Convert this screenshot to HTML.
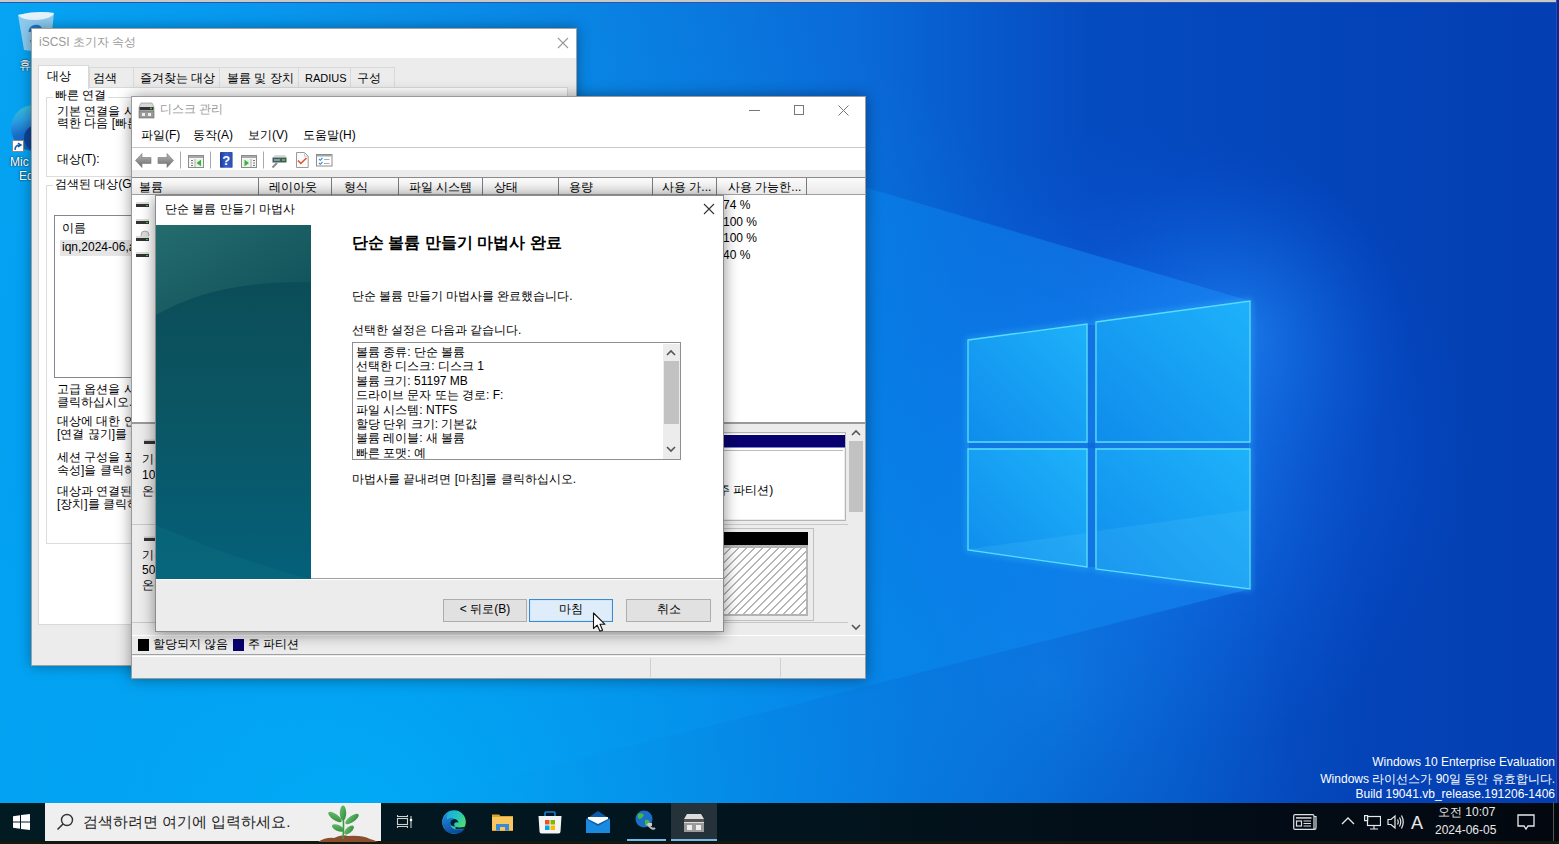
<!DOCTYPE html>
<html><head><meta charset="utf-8">
<style>
*{margin:0;padding:0;box-sizing:border-box}
html,body{width:1559px;height:844px;overflow:hidden;background:#0060d0;font-family:"Liberation Sans",sans-serif;font-size:12px;color:#000}
.a{position:absolute}
#desk{left:0;top:0;width:1559px;height:844px;overflow:hidden}
.t{position:absolute;white-space:nowrap;line-height:1}
</style></head><body>
<div id="desk" class="a">
<svg class="a" style="left:0;top:0" width="1559" height="844" viewBox="0 0 1559 844">
<defs>
<linearGradient id="bg" x1="0" y1="0" x2="1559" y2="0" gradientUnits="userSpaceOnUse">
<stop offset="0" stop-color="#0aa8f4"/>
<stop offset="0.38" stop-color="#0a82e2"/>
<stop offset="0.55" stop-color="#0a6ad8"/>
<stop offset="0.70" stop-color="#054bc0"/>
<stop offset="1" stop-color="#033eb2"/>
</linearGradient>
<linearGradient id="beam" x1="1250" y1="0" x2="0" y2="0" gradientUnits="userSpaceOnUse">
<stop offset="0" stop-color="#1a8cf8" stop-opacity="0.9"/>
<stop offset="0.3" stop-color="#0a88f0" stop-opacity="0.75"/>
<stop offset="1" stop-color="#00a0f0" stop-opacity="0.6"/>
</linearGradient>
<radialGradient id="glow2" cx="1240" cy="330" r="170" gradientUnits="userSpaceOnUse">
<stop offset="0" stop-color="#2a9cff" stop-opacity="0.45"/>
<stop offset="1" stop-color="#0a60e0" stop-opacity="0"/>
</radialGradient>
<radialGradient id="glow3" cx="1050" cy="680" r="330" gradientUnits="userSpaceOnUse">
<stop offset="0" stop-color="#1a90f0" stop-opacity="0.45"/>
<stop offset="1" stop-color="#0a70e0" stop-opacity="0"/>
</radialGradient>
<radialGradient id="glow" cx="1150" cy="445" r="320" gradientUnits="userSpaceOnUse">
<stop offset="0" stop-color="#2a9cff" stop-opacity="0.8"/>
<stop offset="0.55" stop-color="#1470f0" stop-opacity="0.35"/>
<stop offset="1" stop-color="#0a50e0" stop-opacity="0"/>
</radialGradient>
<radialGradient id="floor" cx="350" cy="844" r="950" gradientUnits="userSpaceOnUse">
<stop offset="0" stop-color="#00b0f8" stop-opacity="0.85"/>
<stop offset="0.6" stop-color="#0098ee" stop-opacity="0.35"/>
<stop offset="1" stop-color="#0090ee" stop-opacity="0"/>
</radialGradient>
<linearGradient id="pane" x1="0" y1="1" x2="1" y2="0">
<stop offset="0" stop-color="#0f8cec"/>
<stop offset="1" stop-color="#1eb2fa"/>
</linearGradient>
<filter id="bl" x="-20%" y="-20%" width="140%" height="140%"><feGaussianBlur stdDeviation="3"/></filter>
</defs>
<rect width="1559" height="844" fill="url(#bg)"/>
<rect width="1559" height="844" fill="url(#glow)"/>
<rect width="1559" height="844" fill="url(#glow2)"/>
<rect width="1559" height="844" fill="url(#glow3)"/>
<polygon points="1250,301 0,-68 0,906 1250,589" fill="url(#beam)" opacity="0.6"/>
<rect width="1559" height="844" fill="url(#floor)"/>
<g stroke="#40d0ff" stroke-width="3" fill="none" filter="url(#bl)" opacity="0.55">
<polygon points="968,340 1087,324 1087,442 968,442"/>
<polygon points="1096,322 1250,301 1250,442 1096,442"/>
<polygon points="968,449 1087,449 1087,567 968,550"/>
<polygon points="1096,449 1250,449 1250,589 1096,569"/>
</g>
<rect x="1088" y="325" width="7" height="242" fill="#0a5ed6" opacity="0.5"/>
<rect x="969" y="443" width="280" height="5" fill="#0a5ed6" opacity="0.5"/>
<g stroke="#5adcff" stroke-width="1.3" fill="url(#pane)">
<polygon points="968,340 1087,324 1087,442 968,442"/>
<polygon points="1096,322 1250,301 1250,442 1096,442"/>
<polygon points="968,449 1087,449 1087,567 968,550"/>
<polygon points="1096,449 1250,449 1250,589 1096,569"/>
</g>
<polygon points="969,549 1087,533 1087,566 969,550" fill="#6ad8ff" opacity="0.14"/>
<polygon points="1096,531 1249,510 1249,588 1096,568" fill="#6ad8ff" opacity="0.13"/>
</svg>
<div class="a" style="left:0;top:0;width:1559px;height:2px;background:#c8c8c8"></div><div class="a" style="left:0;top:2px;width:1559px;height:1px;background:#2856a8"></div>
<div class="a" style="left:1556px;top:0;width:1px;height:844px;background:#1a50c0"></div><div class="a" style="left:1557px;top:0;width:2px;height:844px;background:#1a2288"></div>
</div>


<!-- desktop icons -->
<div class="a" style="left:16px;top:10px;width:40px;height:42px">
<svg width="40" height="42" viewBox="0 0 40 42"><path d="M2,5 Q20,0 38,3 L34,40 Q20,42 8,40 Z" fill="#b8d8ee" opacity="0.75"/><path d="M2,5 Q20,0 38,3 Q36,9 20,10 Q5,10 2,5Z" fill="#e4f2fb"/><path d="M14,22 A6,6 0 0 1 25,19 M26,27 A6,6 0 0 1 15,30" stroke="#1f74c4" stroke-width="3" fill="none"/></svg>
</div>
<div class="t" style="left:19px;top:59px;color:#fff;font-size:12px;text-shadow:0 0 2px #000">휴</div>
<div class="a" style="left:11px;top:105px;width:46px;height:46px;border-radius:50%;background:linear-gradient(165deg,#3ec6d6 0%,#2a9ee0 30%,#1a6cc8 55%,#0d56b0 100%)"></div><div class="a" style="left:24px;top:125px;width:26px;height:26px;border-radius:50%;background:#0b4596"></div>
<div class="a" style="left:12px;top:140px;width:12px;height:12px;background:#fff;border:1px solid #888"><svg width="10" height="10" viewBox="0 0 10 10"><path d="M2,8 Q2,3 7,3 M5,1 L8,3 L5,5" stroke="#1060b0" stroke-width="1.5" fill="none"/></svg></div>
<div class="t" style="left:10px;top:156px;color:#fff;font-size:12px;text-shadow:0 0 2px #000">Mic</div>
<div class="t" style="left:19px;top:170px;color:#fff;font-size:12px;text-shadow:0 0 2px #000">Ed</div>

<!-- iSCSI window -->
<div class="a" id="isc" style="left:31px;top:28px;width:546px;height:638px;background:#ececec;border:1px solid #a0a0a0;box-shadow:0 0 12px rgba(0,0,0,0.35);overflow:hidden">
 <div class="a" style="left:0;top:0;width:544px;height:29px;background:#fff"></div>
 <div class="t" style="left:7px;top:7px;color:#999;font-size:12px">iSCSI 초기자 속성</div>
 <svg class="a" style="left:525px;top:8px" width="12" height="12" viewBox="0 0 12 12"><path d="M1,1 L11,11 M11,1 L1,11" stroke="#999" stroke-width="1.1"/></svg>
 <!-- tabs -->
 <div class="a" style="left:57px;top:38px;width:306px;height:21px;border:1px solid #d9d9d9;border-bottom:none;background:#ececec"></div>
 <div class="a" style="left:101px;top:38px;width:1px;height:21px;background:#d9d9d9"></div>
 <div class="a" style="left:187px;top:38px;width:1px;height:21px;background:#d9d9d9"></div>
 <div class="a" style="left:266px;top:38px;width:1px;height:21px;background:#d9d9d9"></div>
 <div class="a" style="left:318px;top:38px;width:1px;height:21px;background:#d9d9d9"></div>
 <div class="a" style="left:6px;top:58px;width:530px;height:538px;background:#fff;border:1px solid #d9d9d9"></div>
 <div class="a" style="left:6px;top:36px;width:51px;height:24px;background:#fff;border:1px solid #d9d9d9;border-bottom:none"></div>
 <div class="t" style="left:15px;top:41px;color:#000;font-size:12px">대상</div>
 <div class="t" style="left:61px;top:43px;font-size:12px">검색</div>
 <div class="t" style="left:108px;top:43px;font-size:12px">즐겨찾는 대상</div>
 <div class="t" style="left:195px;top:43px;font-size:12px">볼륨 및 장치</div>
 <div class="t" style="left:273px;top:44px;font-size:11px">RADIUS</div>
 <div class="t" style="left:325px;top:43px;font-size:12px">구성</div>
 <!-- group 1 -->
 <div class="a" style="left:14px;top:68px;width:514px;height:80px;border:1px solid #dcdcdc"></div>
 <div class="t" style="left:21px;top:60px;font-size:12px;background:#fff;padding:0 2px">빠른 연결</div>
 <div class="t" style="left:25px;top:76px;font-size:12px;line-height:12px">기본 연결을 사용하여 대상에 로그온하려면 대상의 IP 주소 또는 DNS 이름을 입<br>력한 다음 [빠른 연결]을 클릭하십시오.</div>
 <div class="t" style="left:25px;top:124px;font-size:12px">대상(T):</div>
 <!-- group 2 -->
 <div class="a" style="left:14px;top:156px;width:514px;height:359px;border:1px solid #dcdcdc"></div>
 <div class="t" style="left:21px;top:149px;font-size:12px;background:#fff;padding:0 2px">검색된 대상(G)</div>
 <div class="a" style="left:22px;top:186px;width:420px;height:163px;border:1px solid #828790;background:#fff"></div>
 <div class="t" style="left:30px;top:193px;font-size:12px">이름</div>
 <div class="a" style="left:28px;top:211px;width:200px;height:16px;background:#e5e5e5"></div>
 <div class="t" style="left:30px;top:212px;font-size:12px">iqn,2024-06,a</div>
 <div class="t" style="left:25px;top:354px;font-size:12px;line-height:13px">고급 옵션을 사용하여 연결하려면 대상을 선택한 다음 [연결]을<br>클릭하십시오.</div>
 <div class="t" style="left:25px;top:386px;font-size:12px;line-height:13px">대상에 대한 연결을 완전히 끊으려면 대상을 선택한 다음<br>[연결 끊기]를 클릭하십시오.</div>
 <div class="t" style="left:25px;top:422px;font-size:12px;line-height:13px">세션 구성을 포함한 대상 속성을 보려면 대상을 선택하고 [속<br>속성]을 클릭하십시오.</div>
 <div class="t" style="left:25px;top:456px;font-size:12px;line-height:13px">대상과 연결된 장치를 구성하려면 대상을 선택한 다음<br>[장치]를 클릭하십시오.</div>
</div>


<!-- Disk management window -->
<div class="a" style="left:131px;top:96px;width:735px;height:583px;background:#ececec;border:1px solid #9a9a9a;box-shadow:0 0 14px rgba(0,0,0,0.4)"></div>
<div class="a" style="left:132px;top:97px;width:733px;height:51px;background:#fff"></div>
<div class="a" style="left:132px;top:147px;width:733px;height:1px;background:#c8c8c8"></div>
<div class="a" style="left:132px;top:148px;width:733px;height:22px;background:#fff"></div>
<!-- title icon -->
<svg class="a" style="left:138px;top:102px" width="17" height="17" viewBox="0 0 17 17">
<path d="M3,1 L14,1 L16,5 L16,9 L1,9 L1,5 Z" fill="#d8d8d8" stroke="#888" stroke-width="0.6"/>
<rect x="1.5" y="5" width="14" height="3" fill="#333"/><rect x="12" y="5.6" width="2" height="1.6" fill="#3c3"/>
<rect x="1" y="9" width="15" height="7" fill="#9a9a9a" stroke="#666" stroke-width="0.6"/>
<rect x="4" y="11" width="3" height="3" fill="#eee"/><rect x="10" y="11" width="3" height="3" fill="#eee"/>
</svg>
<div class="t" style="left:160px;top:103px;color:#9a9a9a;font-size:12px">디스크 관리</div>
<div class="a" style="left:749px;top:110px;width:11px;height:1px;background:#777"></div>
<div class="a" style="left:794px;top:105px;width:10px;height:10px;border:1px solid #777"></div>
<svg class="a" style="left:838px;top:105px" width="11" height="11" viewBox="0 0 11 11"><path d="M0.5,0.5 L10.5,10.5 M10.5,0.5 L0.5,10.5" stroke="#777" stroke-width="1"/></svg>
<!-- menu -->
<div class="t" style="left:141px;top:129px;font-size:12px">파일(F)</div>
<div class="t" style="left:193px;top:129px;font-size:12px">동작(A)</div>
<div class="t" style="left:248px;top:129px;font-size:12px">보기(V)</div>
<div class="t" style="left:303px;top:129px;font-size:12px">도움말(H)</div>
<!-- toolbar -->
<svg class="a" style="left:134px;top:151px" width="200" height="19" viewBox="0 0 200 19">
<defs><linearGradient id="ag" x1="0" y1="0" x2="0" y2="1"><stop offset="0" stop-color="#b8b8b8"/><stop offset="1" stop-color="#6a6a6a"/></linearGradient></defs>
<path d="M1.5,9.5 L8,2.5 L8,6.5 L17,6.5 L17,12.5 L8,12.5 L8,16.5 Z" fill="url(#ag)" stroke="#777" stroke-width="0.6"/>
<path d="M39.5,9.5 L33,2.5 L33,6.5 L24,6.5 L24,12.5 L33,12.5 L33,16.5 Z" fill="url(#ag)" stroke="#777" stroke-width="0.6"/>
<rect x="46" y="0.5" width="1" height="17" fill="#aaa"/>
<rect x="54.5" y="4.5" width="15" height="12" fill="#f6f6f6" stroke="#8c8c8c"/>
<rect x="55" y="5" width="14" height="2" fill="#a8a8a8"/>
<rect x="57" y="9" width="2" height="1" fill="#777"/><rect x="57" y="11.5" width="2" height="1" fill="#777"/><rect x="57" y="14" width="2" height="1" fill="#777"/>
<rect x="60.5" y="8" width="1" height="8" fill="#aaa"/>
<rect x="62" y="8.5" width="6.5" height="7" fill="#e4f4e4"/>
<path d="M67,8.8 L62.5,12 L67,15.2 Z" fill="#3cae3c"/>
<rect x="76" y="0.5" width="1" height="17" fill="#aaa"/>
<defs><linearGradient id="hb" x1="0" y1="0" x2="1" y2="0"><stop offset="0" stop-color="#1d3a98"/><stop offset="0.5" stop-color="#3a62cc"/><stop offset="1" stop-color="#2a4cb0"/></linearGradient></defs>
<rect x="86" y="1" width="12.6" height="15.8" rx="0.8" fill="url(#hb)"/>
<text x="92.3" y="13.8" font-size="13" fill="#fff" text-anchor="middle" font-family="Liberation Sans" font-weight="bold">?</text>
<rect x="107.5" y="4.5" width="15" height="12" fill="#f6f6f6" stroke="#8c8c8c"/>
<rect x="108" y="5" width="14" height="2" fill="#a8a8a8"/>
<rect x="109" y="8.5" width="6.5" height="7" fill="#e4f4e4"/>
<path d="M110.5,8.8 L115,12 L110.5,15.2 Z" fill="#3cae3c"/>
<rect x="116.5" y="8" width="1" height="8" fill="#aaa"/>
<rect x="119" y="9" width="2" height="1" fill="#777"/><rect x="119" y="11.5" width="2" height="1" fill="#777"/><rect x="119" y="14" width="2" height="1" fill="#777"/>
<rect x="129" y="0.5" width="1" height="17" fill="#aaa"/>
<path d="M139,6.5 L141,4 L151,4 L152.5,6.5 Z" fill="#d8d8d8"/>
<rect x="138.5" y="6.5" width="14" height="5" fill="#4a5a5a"/>
<rect x="148" y="8" width="3" height="2" fill="#3c3"/>
<rect x="140" y="8" width="6" height="2" fill="#7a9ab0"/>
<path d="M143,12 L138.5,16.5" stroke="#8a8a8a" stroke-width="2"/>
<path d="M162.5,1.5 L170.5,1.5 L174.2,5.2 L174.2,16.5 L162.5,16.5 Z" fill="#fafafa" stroke="#9a9a9a"/>
<path d="M170.5,1.5 V5.2 H174.2" fill="none" stroke="#bbb" stroke-width="0.8"/>
<path d="M164,9.5 L166.8,12.5 L172.5,7" stroke="#e0502a" stroke-width="1.5" fill="none"/>
<rect x="182.5" y="3.5" width="15.5" height="11.5" fill="#fff" stroke="#8c8c8c"/>
<rect x="183" y="4" width="14.5" height="1.5" fill="#9aa"/>
<path d="M185,8 L186.3,9.3 L188.5,7 M185,12 L186.3,13.3 L188.5,11" stroke="#3a86e0" stroke-width="1.1" fill="none"/>
<path d="M190,8.5 H195.5 M190,12.5 H195.5" stroke="#aaa" stroke-width="1"/>
</svg>
<!-- list view -->
<div class="a" style="left:132px;top:177px;width:733px;height:1px;background:#8a8a8a"></div>
<div class="a" style="left:132px;top:178px;width:733px;height:17px;background:linear-gradient(#fbfbfb,#e9e9e9);border-bottom:1px solid #a0a0a0"></div>
<div class="a" style="left:132px;top:195px;width:733px;height:227px;background:#fff"></div>
<div class="a" style="left:132px;top:422px;width:733px;height:2px;background:#9a9a9a"></div>
<div class="a" style="left:258px;top:178px;width:1px;height:17px;background:#7a7a7a"></div>
<div class="a" style="left:331px;top:178px;width:1px;height:17px;background:#7a7a7a"></div>
<div class="a" style="left:398px;top:178px;width:1px;height:17px;background:#7a7a7a"></div>
<div class="a" style="left:482px;top:178px;width:1px;height:17px;background:#7a7a7a"></div>
<div class="a" style="left:558px;top:178px;width:1px;height:17px;background:#7a7a7a"></div>
<div class="a" style="left:652px;top:178px;width:1px;height:17px;background:#7a7a7a"></div>
<div class="a" style="left:716px;top:178px;width:1px;height:17px;background:#7a7a7a"></div>
<div class="a" style="left:806px;top:178px;width:1px;height:17px;background:#7a7a7a"></div>
<div class="t" style="left:139px;top:181px;font-size:12px">볼륨</div>
<div class="t" style="left:269px;top:181px;font-size:12px">레이아웃</div>
<div class="t" style="left:344px;top:181px;font-size:12px">형식</div>
<div class="t" style="left:409px;top:181px;font-size:12px">파일 시스템</div>
<div class="t" style="left:494px;top:181px;font-size:12px">상태</div>
<div class="t" style="left:569px;top:181px;font-size:12px">용량</div>
<div class="t" style="left:662px;top:181px;font-size:12px">사용 가...</div>
<div class="t" style="left:728px;top:181px;font-size:12px">사용 가능한...</div>
<div class="t" style="left:723px;top:199px;font-size:12px">74 %</div>
<div class="t" style="left:723px;top:216px;font-size:12px">100 %</div>
<div class="t" style="left:723px;top:232px;font-size:12px">100 %</div>
<div class="t" style="left:723px;top:249px;font-size:12px">40 %</div>
<svg class="a" style="left:135px;top:198px" width="16" height="64" viewBox="0 0 16 64">
<g><rect x="1" y="4" width="13" height="2" fill="#ddd"/><rect x="1" y="6" width="13" height="3" fill="#333"/><rect x="11" y="7" width="2" height="1" fill="#4c4"/></g>
<g transform="translate(0,17)"><rect x="1" y="4" width="13" height="2" fill="#ddd"/><rect x="1" y="6" width="13" height="3" fill="#333"/><rect x="11" y="7" width="2" height="1" fill="#4c4"/></g>
<g transform="translate(0,34)"><circle cx="10" cy="3" r="4" fill="#ddd" stroke="#999" stroke-width="0.8"/><rect x="1" y="4" width="13" height="2" fill="#ddd"/><rect x="1" y="6" width="13" height="3" fill="#333"/><rect x="11" y="7" width="2" height="1" fill="#4c4"/></g>
<g transform="translate(0,50)"><rect x="1" y="4" width="13" height="2" fill="#ddd"/><rect x="1" y="6" width="13" height="3" fill="#333"/><rect x="11" y="7" width="2" height="1" fill="#4c4"/></g>
</svg>
<!-- lower pane -->
<div class="a" style="left:132px;top:424px;width:733px;height:211px;background:#ececec"></div>
<div class="a" style="left:132px;top:524px;width:716px;height:1px;background:#c8c8c8"></div>
<div class="a" style="left:132px;top:622px;width:716px;height:1px;background:#c8c8c8"></div>
<svg class="a" style="left:143px;top:438px" width="16" height="110" viewBox="0 0 16 110"><rect x="1" y="3" width="14" height="3" fill="#333"/><rect x="1" y="1.5" width="14" height="1.5" fill="#ccc"/><rect x="1" y="100" width="14" height="3" fill="#333"/><rect x="1" y="98.5" width="14" height="1.5" fill="#ccc"/></svg>
<div class="t" style="left:142px;top:451px;font-size:12px;line-height:16px">기본<br>10.00 GB<br>온라인</div>
<div class="t" style="left:142px;top:548px;font-size:12px;line-height:15px">기본<br>50.00 GB<br>온라인</div>
<!-- partition right pieces -->
<div class="a" style="left:700px;top:432px;width:146px;height:89px;background:#fff;border:1px solid #b5b5b5;box-shadow:inset 0 0 0 1px #ececec"></div>
<div class="a" style="left:700px;top:435px;width:145px;height:13px;background:#08006e;border-bottom:1px solid #7a86c8"></div>
<div class="a" style="left:700px;top:450px;width:143px;height:1px;background:#bbb"></div>
<div class="t" style="left:714px;top:484px;font-size:12px">(주 파티션)</div>
<div class="a" style="left:700px;top:528px;width:114px;height:93px;background:#ececec;border:1px solid #c0c0c0"></div>
<div class="a" style="left:700px;top:532px;width:108px;height:13px;background:#000"></div>
<div class="a" style="left:700px;top:545px;width:108px;height:71px;background:#b4b4b4"></div>
<div class="a" style="left:700px;top:548px;width:106px;height:66px;background:repeating-linear-gradient(135deg,#fff 0 4.2px,#b4b4b4 4.2px 5.6px)"></div>
<!-- vertical scrollbar -->
<div class="a" style="left:848px;top:425px;width:16px;height:210px;background:#ececec"></div>
<div class="a" style="left:849px;top:441px;width:14px;height:71px;background:#c2c2c2"></div>
<svg class="a" style="left:850px;top:429px" width="12" height="8" viewBox="0 0 12 8"><path d="M2,6 L6,2 L10,6" stroke="#555" stroke-width="1.6" fill="none"/></svg>
<svg class="a" style="left:850px;top:623px" width="12" height="8" viewBox="0 0 12 8"><path d="M2,2 L6,6 L10,2" stroke="#555" stroke-width="1.6" fill="none"/></svg>
<!-- legend -->
<div class="a" style="left:132px;top:635px;width:733px;height:20px;background:#ececec;border-top:1px solid #fff;border-bottom:1px solid #a0a0a0"></div>
<div class="a" style="left:138px;top:639px;width:11px;height:12px;background:#000"></div>
<div class="t" style="left:153px;top:638px;font-size:12px">할당되지 않음</div>
<div class="a" style="left:233px;top:639px;width:11px;height:12px;background:#08006e"></div>
<div class="t" style="left:248px;top:638px;font-size:12px">주 파티션</div>
<!-- status bar -->
<div class="a" style="left:132px;top:656px;width:733px;height:22px;background:#ececec;border-top:1px solid #fff"></div>
<div class="a" style="left:650px;top:658px;width:1px;height:19px;background:#d0d0d0"></div>
<div class="a" style="left:780px;top:658px;width:1px;height:19px;background:#d0d0d0"></div>


<!-- wizard -->
<div class="a" style="left:155px;top:195px;width:569px;height:437px;background:#ececec;border:1px solid #8c8c8c;box-shadow:0 2px 14px rgba(0,0,0,0.45)"></div>
<div class="a" style="left:156px;top:196px;width:567px;height:383px;background:#fff"></div>
<div class="a" style="left:156px;top:578px;width:567px;height:1px;background:#a0a0a0"></div>
<div class="a" style="left:156px;top:579px;width:567px;height:1px;background:#fff"></div>
<div class="t" style="left:165px;top:203px;font-size:12px;color:#000">단순 볼륨 만들기 마법사</div>
<svg class="a" style="left:703px;top:203px" width="12" height="12" viewBox="0 0 12 12"><path d="M1,1 L11,11 M11,1 L1,11" stroke="#333" stroke-width="1.1"/></svg>
<svg class="a" style="left:156px;top:225px" width="155" height="354" viewBox="0 0 155 354">
<defs>
<linearGradient id="tl" x1="0" y1="0" x2="0" y2="1"><stop offset="0" stop-color="#0b4a55"/><stop offset="0.5" stop-color="#0b5562"/><stop offset="1" stop-color="#04607a"/></linearGradient>
<linearGradient id="tt" x1="0" y1="0" x2="1" y2="1"><stop offset="0" stop-color="#246c6e"/><stop offset="1" stop-color="#0f4f58"/></linearGradient>
</defs>
<rect width="155" height="354" fill="url(#tl)"/>
<path d="M0,0 H155 V57 Q60,55 0,90 Z" fill="url(#tt)"/>
<path d="M0,300 Q80,335 155,354 H0 Z" fill="#0f7480" opacity="0.35"/>
</svg>
<div class="t" style="left:352px;top:235px;font-size:16px;font-weight:bold;color:#000">단순 볼륨 만들기 마법사 완료</div>
<div class="t" style="left:352px;top:290px;font-size:12px">단순 볼륨 만들기 마법사를 완료했습니다.</div>
<div class="t" style="left:352px;top:324px;font-size:12px">선택한 설정은 다음과 같습니다.</div>
<div class="a" style="left:352px;top:342px;width:329px;height:118px;border:1px solid #8f8f8f;background:#fff;overflow:hidden">
<div class="t" style="left:3px;top:2px;font-size:12px;line-height:14.4px">볼륨 종류: 단순 볼륨<br>선택한 디스크: 디스크 1<br>볼륨 크기: 51197 MB<br>드라이브 문자 또는 경로: F:<br>파일 시스템: NTFS<br>할당 단위 크기: 기본값<br>볼륨 레이블: 새 볼륨<br>빠른 포맷: 예</div>
<div class="a" style="left:310px;top:1px;width:17px;height:115px;background:#ececec"></div>
<div class="a" style="left:311px;top:18px;width:15px;height:63px;background:#c2c2c2"></div>
<svg class="a" style="left:312px;top:6px" width="12" height="8" viewBox="0 0 12 8"><path d="M2,6 L6,2 L10,6" stroke="#555" stroke-width="1.6" fill="none"/></svg>
<svg class="a" style="left:312px;top:102px" width="12" height="8" viewBox="0 0 12 8"><path d="M2,2 L6,6 L10,2" stroke="#555" stroke-width="1.6" fill="none"/></svg>
</div>
<div class="t" style="left:352px;top:473px;font-size:12px">마법사를 끝내려면 [마침]를 클릭하십시오.</div>
<div class="a" style="left:443px;top:599px;width:84px;height:23px;background:#e1e1e1;border:1px solid #adadad"></div>
<div class="t" style="left:443px;top:603px;width:84px;text-align:center;font-size:12px">&lt; 뒤로(B)</div>
<div class="a" style="left:529px;top:599px;width:84px;height:23px;background:#deedf9;border:1px solid #3a8ad6;box-shadow:inset 0 0 0 1px #cfe6f8"></div>
<div class="t" style="left:529px;top:603px;width:84px;text-align:center;font-size:12px">마침</div>
<div class="a" style="left:626px;top:599px;width:85px;height:23px;background:#e1e1e1;border:1px solid #adadad"></div>
<div class="t" style="left:626px;top:603px;width:85px;text-align:center;font-size:12px">취소</div>
<!-- cursor -->
<svg class="a" style="left:592px;top:612px" width="15" height="21" viewBox="0 0 15 21"><path d="M1.5,1 L1.5,16.5 L5.2,13.2 L8,19.3 L10.6,18.2 L8,12.3 L13,12.3 Z" fill="#fff" stroke="#111" stroke-width="1.1" stroke-linejoin="round"/></svg>

<!-- watermark -->
<div class="t" style="right:4px;top:756px;color:#fff;font-size:12px;text-align:right">Windows 10 Enterprise Evaluation</div>
<div class="t" style="right:4px;top:773px;color:#fff;font-size:12px;text-align:right">Windows 라이선스가 90일 동안 유효합니다.</div>
<div class="t" style="right:4px;top:788px;color:#fff;font-size:12px;text-align:right">Build 19041.vb_release.191206-1406</div>

<!-- taskbar -->
<div class="a" style="left:0;top:803px;width:1559px;height:41px;background:linear-gradient(90deg,#021a22 0%,#02151e 50%,#030b15 85%,#03080f 100%)"></div>
<div class="a" style="left:0;top:841px;width:1559px;height:3px;background:#14180e"></div>
<div class="a" style="left:45px;top:803px;width:336px;height:38px;background:#efefef"></div>
<svg class="a" style="left:13px;top:814px" width="17" height="16" viewBox="0 0 17 16"><g fill="#fff"><path d="M0,2.2 L7,1.2 V7.4 H0Z"/><path d="M8,1.05 L17,0 V7.4 H8Z"/><path d="M0,8.4 H7 V14.8 L0,13.8Z"/><path d="M8,8.4 H17 V16 L8,14.9Z"/></g></svg>
<svg class="a" style="left:56px;top:813px" width="18" height="18" viewBox="0 0 18 18"><circle cx="11" cy="7" r="5.5" fill="none" stroke="#333" stroke-width="1.4"/><path d="M7,11 L1.5,16.5" stroke="#333" stroke-width="1.6"/></svg>
<div class="t" style="left:83px;top:814px;font-size:15px;color:#222">검색하려면 여기에 입력하세요.</div>
<svg class="a" style="left:318px;top:803px" width="60" height="39" viewBox="0 0 60 39">
<defs><linearGradient id="lf" x1="0" y1="0" x2="1" y2="1"><stop offset="0" stop-color="#6cc070"/><stop offset="1" stop-color="#2f8a3a"/></linearGradient></defs>
<path d="M0,39 Q8,34 16,35 Q24,31 30,33 Q44,32 52,36 Q56,37 60,39Z" fill="#8a4f2e"/>
<path d="M25,36 Q26,24 25,8" stroke="#3f9a40" stroke-width="1.6" fill="none"/>
<ellipse cx="25" cy="10" rx="3.2" ry="7.5" fill="url(#lf)"/>
<ellipse cx="17" cy="14" rx="8" ry="3" transform="rotate(35 17 14)" fill="url(#lf)"/>
<ellipse cx="34" cy="16" rx="8" ry="3" transform="rotate(-35 34 16)" fill="url(#lf)"/>
<ellipse cx="20" cy="25" rx="6.5" ry="3" transform="rotate(25 20 25)" fill="url(#lf)"/>
<ellipse cx="31" cy="27" rx="6" ry="2.8" transform="rotate(-40 31 27)" fill="url(#lf)"/>
</svg>
<!-- task view -->
<svg class="a" style="left:395px;top:813px" width="19" height="17" viewBox="0 0 19 17"><g stroke="#d0d0d0" stroke-width="1.1" fill="none"><path d="M2.5,2 V3.5 H12.5 V2"/><rect x="2.5" y="5.5" width="10" height="6"/><path d="M2.5,15 V13.5 H12.5 V15"/><path d="M16,3 V15"/></g><circle cx="16" cy="7" r="1.3" fill="#fff"/></svg>
<!-- edge -->
<svg class="a" style="left:442px;top:810px" width="25" height="25" viewBox="0 0 25 25">
<defs><linearGradient id="eg2" x1="0" y1="0" x2="1" y2="0.7"><stop offset="0" stop-color="#1a9ee8"/><stop offset="0.55" stop-color="#22c4c0"/><stop offset="1" stop-color="#5ae060"/></linearGradient>
<linearGradient id="eg1" x1="0" y1="0" x2="0.4" y2="1"><stop offset="0" stop-color="#2390e0"/><stop offset="1" stop-color="#0b4aa2"/></linearGradient></defs>
<circle cx="12" cy="12" r="11.8" fill="url(#eg2)"/>
<path d="M6,3 Q0.5,6.5 0.3,12.5 Q1,23 12,23.8 Q19.5,24 23,18.5 Q18,20.5 13.5,19.5 Q8.5,18 8.3,13.5 Q8.3,9.8 12,9 Q9,6.5 5,9.5 Q4.5,5.5 6,3Z" fill="url(#eg1)"/>
<path d="M8.3,13.5 Q8.3,9.8 12,9 Q15.5,8.8 16.5,12.5 Q14,12 12.5,13 Q11.5,14.5 13,16.5 Q8.5,16 8.3,13.5Z" fill="#05203a"/>
<path d="M13.5,16.8 Q17,18.5 23.6,16.5 L23.2,18.3 Q18,20.2 13.5,19.2Z" fill="#062848"/>
</svg>
<!-- explorer -->
<svg class="a" style="left:492px;top:814px" width="21" height="17" viewBox="0 0 21 17"><path d="M0,0.5 H7 L8.5,2 H21 V17 H0Z" fill="#e0a030"/><rect x="0" y="3" width="21" height="13" fill="#f8c860"/><path d="M4,10 H17 V16.5 H13 V13 H8 V16.5 H4Z" fill="#3a8ad8"/><rect x="8" y="13" width="5" height="3.5" fill="#f8c860"/></svg>
<!-- store -->
<svg class="a" style="left:538px;top:811px" width="24" height="23" viewBox="0 0 24 23"><path d="M7,6 V2 Q7,1 8,1 H16 Q17,1 17,2 V6" stroke="#1a80d8" stroke-width="1.6" fill="none"/><path d="M0.5,5 H23.5 L22.5,20.5 Q22.5,22.5 20.5,22.5 H3.5 Q1.5,22.5 1.5,20.5Z" fill="#f4f4f4"/><rect x="7" y="9" width="4.5" height="4.5" fill="#f25022"/><rect x="12.5" y="9" width="4.5" height="4.5" fill="#7fba00"/><rect x="7" y="14.5" width="4.5" height="4.5" fill="#00a4ef"/><rect x="12.5" y="14.5" width="4.5" height="4.5" fill="#ffb900"/></svg>
<!-- mail -->
<svg class="a" style="left:586px;top:811px" width="24" height="22" viewBox="0 0 24 22"><path d="M0,8 L12,0 L24,8 V22 H0Z" fill="#0b5cad"/><path d="M0,8 L12,15 L24,8 V22 H0Z" fill="#1a8ae0"/><path d="M2,8 L12,13 L22,8 L22,6 H2Z" fill="#fff"/></svg>
<!-- globe -->
<svg class="a" style="left:634px;top:810px" width="23" height="22" viewBox="0 0 23 22"><circle cx="10" cy="9" r="8.5" fill="#1a70c8"/><path d="M4,4 Q8,2 10,5 Q8,9 5,9 Q3,7 4,4Z M11,10 Q15,9 16,13 Q13,17 11,15Z" fill="#4ab840"/><path d="M13,14 L16,17 Q19,20 21,18" stroke="#bbb" stroke-width="2" fill="none"/><rect x="14" y="13" width="4" height="3" fill="#ccc"/></svg>
<div class="a" style="left:627px;top:839px;width:39px;height:2px;background:#76b9ed"></div>
<!-- disk mgmt active -->
<div class="a" style="left:671px;top:803px;width:46px;height:38px;background:#26323a"></div>
<div class="a" style="left:671px;top:839px;width:46px;height:2px;background:#76b9ed"></div>
<svg class="a" style="left:683px;top:813px" width="22" height="19" viewBox="0 0 22 19"><path d="M4,1 H18 L21,6 V10 H1 V6Z" fill="#ddd"/><rect x="1" y="6" width="20" height="3" fill="#555"/><rect x="1" y="10" width="20" height="9" fill="#9a9a9a"/><rect x="4" y="12" width="5" height="5" fill="#eee"/><rect x="13" y="12" width="5" height="5" fill="#eee"/></svg>
<!-- tray -->
<svg class="a" style="left:1293px;top:814px" width="24" height="16" viewBox="0 0 24 16"><g stroke="#e0e0e0" stroke-width="1.2" fill="none"><path d="M21,2.5 H23 V14 Q23,15.3 21.5,15.3 H2 Q0.7,15.3 0.7,14 V2 Q0.7,0.7 2,0.7 H19.5 Q21,0.7 21,2 V15"/><rect x="3.5" y="7" width="5" height="5"/><path d="M10.5,7 H18 M10.5,9.5 H18 M10.5,12 H18"/></g><rect x="3" y="3" width="15.5" height="1.8" fill="#bbb"/></svg>
<svg class="a" style="left:1341px;top:816px" width="14" height="9" viewBox="0 0 14 9"><path d="M1,8 L7,2 L13,8" stroke="#e8e8e8" stroke-width="1.3" fill="none"/></svg>
<svg class="a" style="left:1364px;top:815px" width="17" height="15" viewBox="0 0 17 15"><g stroke="#e8e8e8" stroke-width="1.2" fill="none"><rect x="3.5" y="1.5" width="13" height="9"/><path d="M10,10.5 V13.5 M6,14 H14"/><rect x="0.6" y="0.6" width="3" height="5"/></g></svg>
<svg class="a" style="left:1387px;top:814px" width="17" height="16" viewBox="0 0 17 16"><g stroke="#e8e8e8" stroke-width="1.2" fill="none"><path d="M1,5.5 H4 L8,2 V14 L4,10.5 H1Z"/><path d="M10.5,5.5 Q12,8 10.5,10.5 M12.5,3.5 Q15,8 12.5,12.5 M14.5,1.5 Q18,8 14.5,14.5"/></g></svg>
<div class="t" style="left:1411px;top:814px;font-size:18px;color:#e8e8e8">A</div>
<div class="t" style="left:1438px;top:806px;font-size:12px;color:#e8e8e8">오전 10:07</div>
<div class="t" style="left:1435px;top:824px;font-size:12px;color:#e8e8e8">2024-06-05</div>
<svg class="a" style="left:1517px;top:814px" width="18" height="17" viewBox="0 0 18 17"><path d="M1,1 H17 V12 H11 L9,15 L7,12 H1Z" stroke="#e8e8e8" stroke-width="1.3" fill="none"/></svg>
<div class="a" style="left:1553px;top:802px;width:1px;height:39px;background:#555"></div>


</body></html>
